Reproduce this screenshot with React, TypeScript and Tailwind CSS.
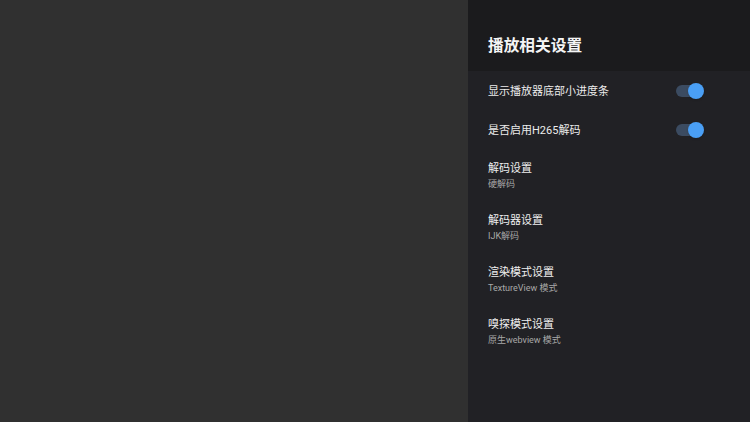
import React from 'react';

const Toggle = () => (
  <div className="relative w-[28px] h-[18px] flex items-center">
    <div className="w-[24px] h-[12px] rounded-full bg-[#3b4b61]" />
    <div className="absolute right-0 top-[1px] w-[16px] h-[16px] rounded-full bg-[#4a9ff5] shadow" />
  </div>
);

const switches = ['显示播放器底部小进度条', '是否启用H265解码'];

const options = [
  { title: '解码设置', value: '硬解码' },
  { title: '解码器设置', value: 'IJK解码' },
  { title: '渲染模式设置', value: 'TextureView 模式' },
  { title: '嗅探模式设置', value: '原生webview 模式' },
];

const App = () => {
  return (
    <div
      className="w-[750px] h-[422px] flex bg-[#303030] overflow-hidden"
      style={{ fontFamily: 'Roboto, "Noto Sans CJK SC", sans-serif' }}
    >
      <div className="flex-1" />
      {/* Settings panel */}
      <div className="w-[282px] h-full flex flex-col bg-[#212125]">
        <div className="h-[71px] bg-[#1b1b1d] pl-[20px] pt-[35px]">
          <h1 className="text-[15.7px] leading-[22px] font-bold text-[#f5f5f5]">播放相关设置</h1>
        </div>
        {switches.map((s) => (
          <div key={s} className="h-[39px] flex items-center justify-between pl-[20px] pr-[46px]">
            <span className="mt-[3px] text-[11px] text-[#ececec]">{s}</span>
            <Toggle />
          </div>
        ))}
        {options.map((o) => (
          <div key={o.title} className="h-[52px] pl-[20px] pt-[12px] flex flex-col">
            <span className="text-[11px] leading-[16px] text-[#efefef]">{o.title}</span>
            <span className="text-[9px] leading-[14px] text-[#a8a8a8]">{o.value}</span>
          </div>
        ))}
      </div>
    </div>
  );
};

export default App;
